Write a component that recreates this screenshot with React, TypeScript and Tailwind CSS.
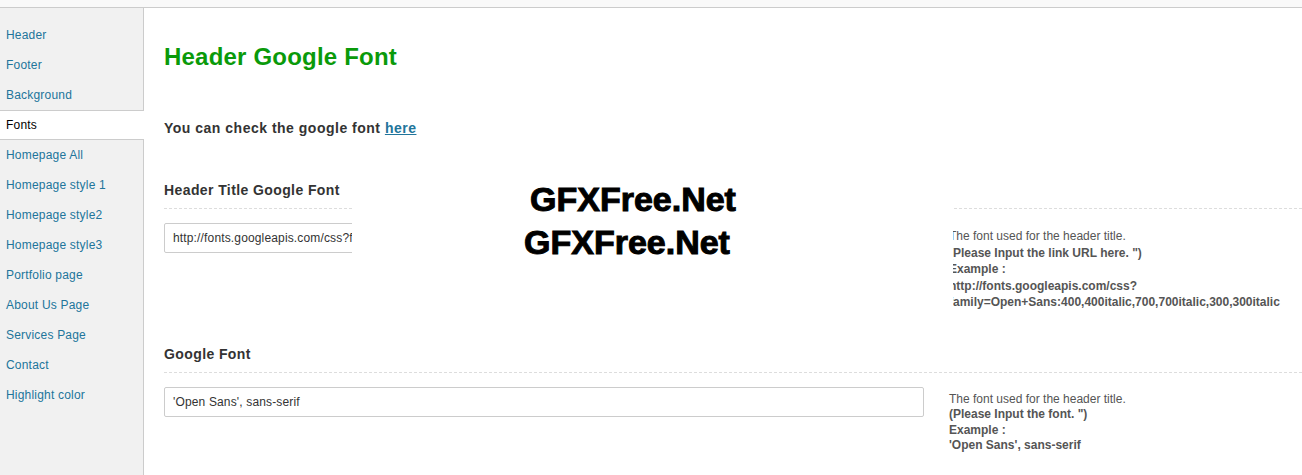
const menu = [
  'Header',
  'Footer',
  'Background',
  'Fonts',
  'Homepage All',
  'Homepage style 1',
  'Homepage style2',
  'Homepage style3',
  'Portfolio page',
  'About Us Page',
  'Services Page',
  'Contact',
  'Highlight color',
]

function Sidebar() {
  return (
    <aside className="w-[144px] shrink-0 bg-[#f1f1f1] border-r border-[#cccccc] pt-3">
      <ul>
        {menu.map((item) =>
          item === 'Fonts' ? (
            <li
              key={item}
              className="relative -mr-px h-[30px] bg-white border-y border-[#cccccc] flex items-center px-1.5 text-[12px] tracking-[0.2px] text-black"
            >
              {item}
            </li>
          ) : (
            <li key={item} className="h-[30px] flex items-center px-1.5">
              <a href="#" className="text-[12px] tracking-[0.2px] text-[#21759b]">
                {item}
              </a>
            </li>
          ),
        )}
      </ul>
    </aside>
  )
}

function Section({
  title,
  value,
  lines,
  descTop,
}: {
  title: string
  value: string
  lines: { text: string; bold?: boolean }[]
  descTop: string
}) {
  return (
    <div>
      <h3 className="text-[14px] leading-[18px] font-bold tracking-[0.4px] text-[#333333] pb-[9px] border-b border-dashed border-[#dddddd]">
        {title}
      </h3>
      <div className="flex mt-[14px]">
        <div className="w-[760px] h-[30px] border border-[#cccccc] rounded-[2px] flex items-center px-2 text-[12px] tracking-[0.15px] text-[#333333] shrink-0 overflow-hidden whitespace-nowrap">
          {value}
        </div>
        <div className={`ml-[25px] text-[12px] text-[#555555] ${descTop}`}>
          {lines.map((l, i) => (
            <div key={i} className={l.bold ? 'font-bold' : ''}>
              {l.text}
            </div>
          ))}
        </div>
      </div>
    </div>
  )
}

export default function App() {
  return (
    <div className="relative min-h-[475px] bg-white font-['Liberation_Sans',Arial,sans-serif] overflow-hidden">
      <div className="h-[8px] bg-[#f9f9f9] border-b border-[#cccccc]" />
      <div className="flex min-h-[467px]">
        <Sidebar />
        <main className="flex-1 pl-[20px] pt-[35px]">
          <h1 className="text-[24px] leading-[28px] font-bold tracking-[0.2px] text-[#0a9a0a]">
            Header Google Font
          </h1>
          <p className="mt-[49px] text-[14px] leading-[16px] font-bold tracking-[0.5px] text-[#333333]">
            You can check the google font{' '}
            <a href="#" className="text-[#21759b] underline">
              here
            </a>
          </p>
          <div className="mt-[45px]">
            <Section
              title="Header Title Google Font"
              value="http://fonts.googleapis.com/css?family=Open+Sans:400,400italic,700,700italic,300,300italic"
              descTop="mt-[5px] leading-[16.5px]"
              lines={[
                { text: 'The font used for the header title.' },
                { text: '(Please Input the link URL here. ")', bold: true },
                { text: 'Example :', bold: true },
                { text: 'http://fonts.googleapis.com/css?', bold: true },
                {
                  text: 'family=Open+Sans:400,400italic,700,700italic,300,300italic',
                  bold: true,
                },
              ]}
            />
          </div>
          <div className="mt-[34px]">
            <Section
              title="Google Font"
              value="'Open Sans', sans-serif"
              descTop="mt-[5px] leading-[15.5px]"
              lines={[
                { text: 'The font used for the header title.' },
                { text: '(Please Input the font. ")', bold: true },
                { text: 'Example :', bold: true },
                { text: "'Open Sans', sans-serif", bold: true },
              ]}
            />
          </div>
        </main>
      </div>

      {/* watermark overlay */}
      <div className="absolute left-[352px] top-[180px] w-[601px] h-[145px] bg-white">
        <div className="absolute left-[178px] top-[4px] text-[34px] leading-[30px] font-bold text-black [-webkit-text-stroke:1px_black] whitespace-nowrap">
          GFXFree.Net
        </div>
        <div className="absolute left-[172px] top-[47px] text-[34px] leading-[30px] font-bold text-black [-webkit-text-stroke:1px_black] whitespace-nowrap">
          GFXFree.Net
        </div>
      </div>
    </div>
  )
}
